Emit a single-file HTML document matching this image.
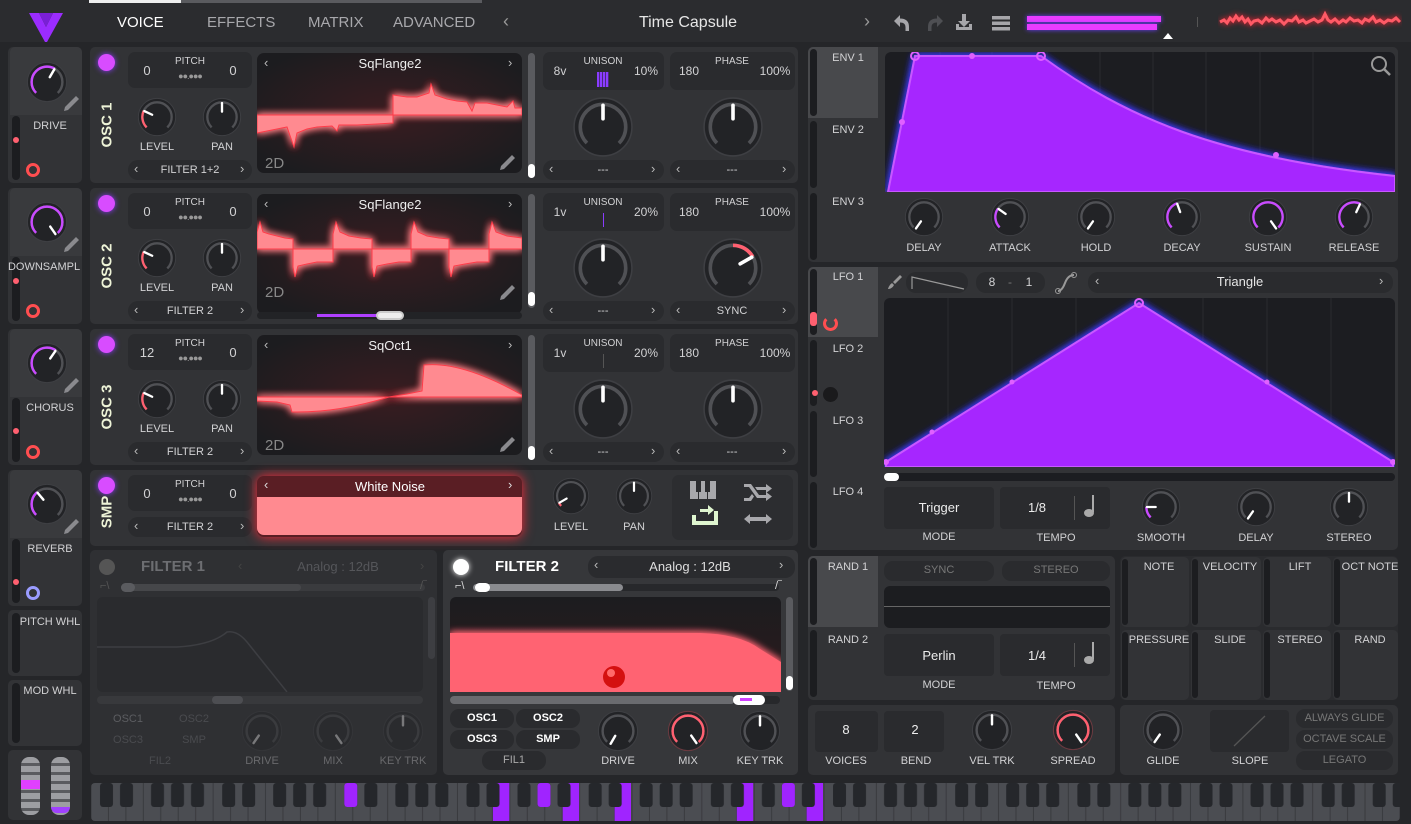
<!DOCTYPE html>
<html><head><meta charset="utf-8">
<style>
*{box-sizing:border-box;margin:0;padding:0}
body{width:1411px;height:824px;background:#252629;font-family:"Liberation Sans",sans-serif;color:#d4d4d6;position:relative;overflow:hidden}
.p{position:absolute}
.c{position:absolute;transform:translateX(-50%);white-space:nowrap;font-size:11px;color:#d2d2d4;line-height:12px}
.pn{position:absolute;background:#323336;border-radius:5px}
.bx{position:absolute;background:#2a2b2e;border-radius:7px}
.dk{position:absolute;background:#1f2023;border-radius:5px}
.sl{position:absolute;background:#1c1d20;border-radius:4px}
.k .o{fill:#222326;stroke:#3e3f43;stroke-width:1.5}
.k .t{fill:none;stroke:#505155;stroke-width:3.5;stroke-dasharray:103.7 100}
.k .v{fill:none;stroke-width:3.5}
.k line{stroke:#fff;stroke-width:3.5;stroke-linecap:round}
.vt{position:absolute;transform:translate(-50%,-50%) rotate(-90deg);font-weight:bold;font-size:15px;color:#eef4d8;white-space:nowrap}
.ar{position:absolute;font-size:13px;color:#bbb}
.dim{opacity:.35}
.tab{position:absolute;font-size:11px;color:#d8d8d8;transform:translateX(-50%)}
.btn{position:absolute;background:#2a2b2e;border-radius:9px;font-size:11px;text-align:center;line-height:19px}
</style></head><body>

<!-- TOP BAR -->
<div class="p" style="left:0;top:0;width:1411px;height:42px;background:#2b2c2f"></div>
<div class="p" style="left:89px;top:0;width:92px;height:3px;background:#eee"></div>
<div class="p" style="left:181px;top:0;width:301px;height:3px;background:#5a5b5f"></div>
<svg class="p" style="left:26px;top:10px" width="40" height="34" viewBox="0 0 40 34"><path d="M3,3 L13,3 L20,17 L27,3 L37,3 L21,32 L19,32 Z" fill="#9b2cff"/><path d="M13,3 L20,17 L27,3" fill="#7a1fd6"/></svg>
<div class="p" style="left:117px;top:14px;font-size:15px;color:#fff">VOICE</div>
<div class="p" style="left:207px;top:14px;font-size:15px;color:#a8a8ac">EFFECTS</div>
<div class="p" style="left:308px;top:14px;font-size:15px;color:#a8a8ac">MATRIX</div>
<div class="p" style="left:393px;top:14px;font-size:15px;color:#a8a8ac">ADVANCED</div>
<div class="p" style="left:503px;top:11px;font-size:18px;color:#999">‹</div>
<div class="c" style="left:688px;top:14px;font-size:16px;line-height:18px;color:#e6e6e6">Time Capsule</div>
<div class="p" style="left:864px;top:11px;font-size:18px;color:#999">›</div>
<svg class="p" style="left:890px;top:12px" width="125" height="22" viewBox="0 0 125 22">
<path d="M4,9 L10,3 L10,6.5 Q19,6.5 19,15 L19,19 L15.5,19 L15.5,15 Q15.5,10.5 10,10.5 L10,15 Z" fill="#a6a6aa"/>
<path d="M53,9 L47,3 L47,6.5 Q38,6.5 38,15 L38,19 L41.5,19 L41.5,15 Q41.5,10.5 47,10.5 L47,15 Z" fill="#4e4f53"/>
<path d="M72,2 L76,2 L76,9 L80,9 L74,15 L68,9 L72,9 Z" fill="#a6a6aa"/><path d="M66,12 L66,18 L82,18 L82,12 L79,12 L79,15 L69,15 L69,12Z" fill="#a6a6aa"/>
<rect x="102" y="4" width="18" height="3.5" fill="#a6a6aa"/><rect x="102" y="9.5" width="18" height="3.5" fill="#a6a6aa"/><rect x="102" y="15" width="18" height="3.5" fill="#a6a6aa"/>
</svg>
<div class="p" style="left:1027px;top:16px;width:134px;height:6px;background:#e83cff;box-shadow:0 0 5px #6a3cff"></div>
<div class="p" style="left:1027px;top:24px;width:130px;height:6px;background:#e83cff;box-shadow:0 0 5px #6a3cff"></div>
<div class="p" style="left:1163px;top:33px;width:0;height:0;border-left:5px solid transparent;border-right:5px solid transparent;border-bottom:6px solid #fff"></div>
<div class="p" style="left:1197px;top:17px;width:1px;height:10px;background:#555"></div>
<svg class="p" style="left:1218px;top:8px" width="184" height="28" viewBox="0 0 184 28"><polyline fill="none" stroke="#ff5a66" stroke-width="3" style="filter:drop-shadow(0 0 3px #ff2030)" points="2,14 6,12 9,15 12,10 15,13 18,8 21,12 24,9 27,14 30,11 33,16 36,13 40,12 44,15 48,10 51,13 54,11 58,14 62,12 66,16 70,12 74,13 78,9 81,14 85,12 88,15 92,13 96,11 100,14 104,12 107,6 110,12 113,14 117,11 121,15 125,12 128,14 132,10 136,13 140,12 144,15 147,11 151,13 155,9 158,14 162,12 166,15 170,12 174,13 178,10 182,14"/></svg>

<!-- LEFT MACROS -->
<div class="pn" style="left:8px;top:47px;width:74px;height:136px"></div>
<div class="p" style="left:10px;top:47px;width:72px;height:68px;background:#393a3d;border-radius:5px 5px 0 0"></div>
<div class="pn" style="left:8px;top:188px;width:74px;height:136px"></div>
<div class="p" style="left:10px;top:188px;width:72px;height:68px;background:#393a3d;border-radius:5px 5px 0 0"></div>
<div class="pn" style="left:8px;top:329px;width:74px;height:136px"></div>
<div class="p" style="left:10px;top:329px;width:72px;height:68px;background:#393a3d;border-radius:5px 5px 0 0"></div>
<div class="pn" style="left:8px;top:470px;width:74px;height:136px"></div>
<div class="p" style="left:10px;top:470px;width:72px;height:68px;background:#393a3d;border-radius:5px 5px 0 0"></div>
<div class="pn" style="left:8px;top:610px;width:74px;height:66px"></div>
<div class="pn" style="left:8px;top:680px;width:74px;height:66px"></div>
<div class="pn" style="left:8px;top:750px;width:74px;height:70px"></div>
<div class="sl" style="left:12px;top:116px;width:8px;height:64px"></div>
<div class="sl" style="left:12px;top:257px;width:8px;height:64px"></div>
<div class="sl" style="left:12px;top:398px;width:8px;height:64px"></div>
<div class="sl" style="left:12px;top:539px;width:8px;height:64px"></div>
<div class="sl" style="left:12px;top:613px;width:8px;height:60px"></div>
<div class="sl" style="left:12px;top:683px;width:8px;height:60px"></div>
<div class="p" style="left:13px;top:137px;width:6px;height:6px;border-radius:3px;background:#ff6070"></div>
<div class="p" style="left:13px;top:278px;width:6px;height:6px;border-radius:3px;background:#ff6070"></div>
<div class="p" style="left:13px;top:428px;width:6px;height:6px;border-radius:3px;background:#ff6070"></div>
<div class="p" style="left:13px;top:579px;width:6px;height:6px;border-radius:3px;background:#ff6070"></div>
<div class="p" style="left:26px;top:163px;width:14px;height:14px;border-radius:7px;border:3px solid #ff4e50"></div>
<div class="p" style="left:26px;top:304px;width:14px;height:14px;border-radius:7px;border:3px solid #ff4e50"></div>
<div class="p" style="left:26px;top:445px;width:14px;height:14px;border-radius:7px;border:3px solid #ff4e50"></div>
<div class="p" style="left:26px;top:586px;width:14px;height:14px;border-radius:7px;border:3px solid #9a9cff"></div>
<div class="c" style="left:50px;top:120px">DRIVE</div>
<div class="c" style="left:44px;top:261px">DOWNSAMPL</div>
<div class="c" style="left:50px;top:402px">CHORUS</div>
<div class="c" style="left:50px;top:543px">REVERB</div>
<div class="c" style="left:50px;top:616px">PITCH WHL</div>
<div class="c" style="left:50px;top:685px">MOD WHL</div>
<svg class="p k" style="left:26px;top:61px" width="42" height="42" viewBox="-30 -30 60 60"><circle class="o" r="28"/><circle class="t" r="22" transform="rotate(135)"/><circle class="v" r="22" stroke="#c94bff" stroke-dasharray="63.4 200" transform="rotate(135)"/><line y1="-8" y2="-21" transform="rotate(30)"/></svg>
<svg class="p k" style="left:26px;top:201px" width="42" height="42" viewBox="-30 -30 60 60"><circle class="o" r="28"/><circle class="t" r="22" transform="rotate(135)"/><circle class="v" r="22" stroke="#c94bff" stroke-dasharray="103.7 200" transform="rotate(135)"/><line y1="-8" y2="-21" transform="rotate(145)"/></svg>
<svg class="p k" style="left:26px;top:342px" width="42" height="42" viewBox="-30 -30 60 60"><circle class="o" r="28"/><circle class="t" r="22" transform="rotate(135)"/><circle class="v" r="22" stroke="#c94bff" stroke-dasharray="65 200" transform="rotate(135)"/><line y1="-8" y2="-21" transform="rotate(35)"/></svg>
<svg class="p k" style="left:26px;top:483px" width="42" height="42" viewBox="-30 -30 60 60"><circle class="o" r="28"/><circle class="t" r="22" transform="rotate(135)"/><circle class="v" r="22" stroke="#c94bff" stroke-dasharray="36.5 200" transform="rotate(135)"/><line y1="-8" y2="-21" transform="rotate(-40)"/></svg>
<svg class="p" style="left:62px;top:94px" width="18" height="18" viewBox="0 0 18 18"><path d="M14,2 L17,5 L6,16 L2,17 L3,13 Z" fill="#8a8a8e"/></svg>
<svg class="p" style="left:62px;top:235px" width="18" height="18" viewBox="0 0 18 18"><path d="M14,2 L17,5 L6,16 L2,17 L3,13 Z" fill="#8a8a8e"/></svg>
<svg class="p" style="left:62px;top:376px" width="18" height="18" viewBox="0 0 18 18"><path d="M14,2 L17,5 L6,16 L2,17 L3,13 Z" fill="#8a8a8e"/></svg>
<svg class="p" style="left:62px;top:517px" width="18" height="18" viewBox="0 0 18 18"><path d="M14,2 L17,5 L6,16 L2,17 L3,13 Z" fill="#8a8a8e"/></svg>
<div class="p" style="left:21px;top:757px;width:19px;height:58px;border-radius:8px;background:repeating-linear-gradient(#9d9ea2 0 6px,#5a5b5f 6px 9px)"></div>
<div class="p" style="left:21px;top:780px;width:19px;height:9px;background:#e040ff"></div>
<div class="p" style="left:51px;top:757px;width:19px;height:58px;border-radius:8px;background:repeating-linear-gradient(#9d9ea2 0 6px,#5a5b5f 6px 9px)"></div>
<div class="p" style="left:51px;top:807px;width:19px;height:6px;background:#a040ff;border-radius:0 0 6px 6px"></div>

<!-- OSC ROWS -->
<div class="pn" style="left:90px;top:47px;width:708px;height:136px"></div>
<div class="pn" style="left:90px;top:188px;width:708px;height:136px"></div>
<div class="pn" style="left:90px;top:329px;width:708px;height:136px"></div>
<div class="pn" style="left:90px;top:470px;width:708px;height:76px"></div>

<!-- generic per-osc -->
<div class="p" style="left:98px;top:54px;width:17px;height:17px;border-radius:9px;background:#d84cff;box-shadow:0 0 6px #8a3cff"></div>
<div class="p" style="left:98px;top:195px;width:17px;height:17px;border-radius:9px;background:#d84cff;box-shadow:0 0 6px #8a3cff"></div>
<div class="p" style="left:98px;top:336px;width:17px;height:17px;border-radius:9px;background:#d84cff;box-shadow:0 0 6px #8a3cff"></div>
<div class="p" style="left:98px;top:477px;width:17px;height:17px;border-radius:9px;background:#d84cff;box-shadow:0 0 6px #8a3cff"></div>
<div class="vt" style="left:107px;top:125px">OSC 1</div>
<div class="vt" style="left:107px;top:266px">OSC 2</div>
<div class="vt" style="left:107px;top:407px">OSC 3</div>
<div class="vt" style="left:107px;top:512px">SMP</div>

<!-- pitch boxes -->
<div class="bx" style="left:128px;top:52px;width:124px;height:36px"></div>
<div class="bx" style="left:128px;top:193px;width:124px;height:36px"></div>
<div class="bx" style="left:128px;top:334px;width:124px;height:36px"></div>
<div class="bx" style="left:128px;top:475px;width:124px;height:36px"></div>
<div class="c" style="left:147px;top:65px;font-size:13px">0</div><div class="c" style="left:190px;top:56px;font-size:10px">PITCH</div><div class="c" style="left:233px;top:65px;font-size:13px">0</div>
<div class="c" style="left:147px;top:206px;font-size:13px">0</div><div class="c" style="left:190px;top:197px;font-size:10px">PITCH</div><div class="c" style="left:233px;top:206px;font-size:13px">0</div>
<div class="c" style="left:147px;top:347px;font-size:13px">12</div><div class="c" style="left:190px;top:338px;font-size:10px">PITCH</div><div class="c" style="left:233px;top:347px;font-size:13px">0</div>
<div class="c" style="left:147px;top:488px;font-size:13px">0</div><div class="c" style="left:190px;top:479px;font-size:10px">PITCH</div><div class="c" style="left:233px;top:488px;font-size:13px">0</div>
<div class="c" style="left:190px;top:70px;font-size:9px;color:#999;letter-spacing:-1px">●●.●●●</div>
<div class="c" style="left:190px;top:211px;font-size:9px;color:#999;letter-spacing:-1px">●●.●●●</div>
<div class="c" style="left:190px;top:352px;font-size:9px;color:#999;letter-spacing:-1px">●●.●●●</div>
<div class="c" style="left:190px;top:493px;font-size:9px;color:#999;letter-spacing:-1px">●●.●●●</div>

<!-- level/pan knobs -->
<svg class="p k" style="left:137px;top:97px" width="40" height="40" viewBox="-30 -30 60 60"><circle class="o" r="28"/><circle class="t" r="22" transform="rotate(135)"/><circle class="v" r="22" stroke="#ff6070" stroke-dasharray="26.9 200" transform="rotate(135)"/><line y1="-8" y2="-21" transform="rotate(-65)"/></svg>
<svg class="p k" style="left:202px;top:97px" width="40" height="40" viewBox="-30 -30 60 60"><circle class="o" r="28"/><circle class="t" r="22" transform="rotate(135)"/><line y1="-8" y2="-21"/></svg>
<svg class="p k" style="left:137px;top:238px" width="40" height="40" viewBox="-30 -30 60 60"><circle class="o" r="28"/><circle class="t" r="22" transform="rotate(135)"/><circle class="v" r="22" stroke="#ff6070" stroke-dasharray="26.9 200" transform="rotate(135)"/><line y1="-8" y2="-21" transform="rotate(-65)"/></svg>
<svg class="p k" style="left:202px;top:238px" width="40" height="40" viewBox="-30 -30 60 60"><circle class="o" r="28"/><circle class="t" r="22" transform="rotate(135)"/><line y1="-8" y2="-21"/></svg>
<svg class="p k" style="left:137px;top:379px" width="40" height="40" viewBox="-30 -30 60 60"><circle class="o" r="28"/><circle class="t" r="22" transform="rotate(135)"/><circle class="v" r="22" stroke="#ff6070" stroke-dasharray="26.9 200" transform="rotate(135)"/><line y1="-8" y2="-21" transform="rotate(-65)"/></svg>
<svg class="p k" style="left:202px;top:379px" width="40" height="40" viewBox="-30 -30 60 60"><circle class="o" r="28"/><circle class="t" r="22" transform="rotate(135)"/><line y1="-8" y2="-21"/></svg>
<div class="c" style="left:157px;top:141px">LEVEL</div><div class="c" style="left:222px;top:141px">PAN</div>
<div class="c" style="left:157px;top:282px">LEVEL</div><div class="c" style="left:222px;top:282px">PAN</div>
<div class="c" style="left:157px;top:423px">LEVEL</div><div class="c" style="left:222px;top:423px">PAN</div>

<!-- filter selectors -->
<div class="bx" style="left:128px;top:160px;width:124px;height:20px;border-radius:10px"></div>
<div class="bx" style="left:128px;top:301px;width:124px;height:20px;border-radius:10px"></div>
<div class="bx" style="left:128px;top:442px;width:124px;height:20px;border-radius:10px"></div>
<div class="bx" style="left:128px;top:517px;width:124px;height:20px;border-radius:10px"></div>
<div class="c" style="left:190px;top:164px">FILTER 1+2</div><div class="ar" style="left:134px;top:161px">‹</div><div class="ar" style="left:240px;top:161px">›</div>
<div class="c" style="left:190px;top:305px">FILTER 2</div><div class="ar" style="left:134px;top:302px">‹</div><div class="ar" style="left:240px;top:302px">›</div>
<div class="c" style="left:190px;top:446px">FILTER 2</div><div class="ar" style="left:134px;top:443px">‹</div><div class="ar" style="left:240px;top:443px">›</div>
<div class="c" style="left:190px;top:521px">FILTER 2</div><div class="ar" style="left:134px;top:518px">‹</div><div class="ar" style="left:240px;top:518px">›</div>

<!-- wave displays -->
<svg class="p" style="left:257px;top:53px" width="265" height="120" viewBox="0 0 265 120">
<defs><filter id="gl" x="-20%" y="-40%" width="140%" height="180%"><feGaussianBlur stdDeviation="4" result="b"/><feMerge><feMergeNode in="b"/><feMergeNode in="b"/><feMergeNode in="SourceGraphic"/></feMerge></filter>
<radialGradient id="rg" cx="50%" cy="50%" r="60%"><stop offset="0" stop-color="#3a1c20"/><stop offset="1" stop-color="#1c1c1f"/></radialGradient></defs>
<rect width="265" height="120" rx="7" fill="url(#rg)"/>
<path filter="url(#gl)" fill="#ff8a90" stroke="#ff3a48" stroke-width="1" d="M0,62 L0,80 L10,78 L20,76 L30,74 L37,94 L40,80 L50,76 L60,74 L75,73 L80,78 L82,72 L100,72 L120,71 L136,70 L136,42 L150,44 L160,44 L172,40 L174,31 L178,42 L190,46 L200,48 L210,49 L215,58 L218,50 L230,50 L240,52 L250,54 L256,48 L258,55 L265,55 L265,62 Z"/>
</svg>
<svg class="p" style="left:257px;top:194px" width="265" height="120" viewBox="0 0 265 120">
<rect width="265" height="120" rx="7" fill="url(#rg)"/>
<path filter="url(#gl)" fill="#ff8a90" stroke="#ff3a48" stroke-width="1" d="M0,55 L0,38 L3,28 L6,38 L12,40 L20,42 L28,44 L36,45 L36,73 L38,83 L41,72 L50,70 L60,68 L76,68 L76,40 L79,28 L83,38 L92,42 L104,44 L115,45 L115,73 L117,83 L120,72 L130,70 L142,68 L154,68 L154,40 L157,28 L161,38 L170,42 L182,44 L192,45 L192,73 L194,83 L197,72 L208,70 L220,68 L232,68 L232,40 L235,28 L239,38 L250,42 L265,44 L265,55 Z"/>
</svg>
<svg class="p" style="left:257px;top:335px" width="265" height="120" viewBox="0 0 265 120">
<rect width="265" height="120" rx="7" fill="url(#rg)"/>
<path filter="url(#gl)" fill="#ff8a90" stroke="#ff3a48" stroke-width="1" d="M0,62 L0,66 L20,67 L33,70 L35,77 Q80,78 132,62 L150,59 L165,56 L167,30 Q205,26 265,60 L265,62 Z"/>
</svg>
<div class="c" style="left:390px;top:57px;font-size:13px;line-height:14px;color:#eee">SqFlange2</div>
<div class="c" style="left:390px;top:198px;font-size:13px;line-height:14px;color:#eee">SqFlange2</div>
<div class="c" style="left:390px;top:339px;font-size:13px;line-height:14px;color:#eee">SqOct1</div>
<div class="ar" style="left:264px;top:55px">‹</div><div class="ar" style="left:508px;top:55px">›</div>
<div class="ar" style="left:264px;top:196px">‹</div><div class="ar" style="left:508px;top:196px">›</div>
<div class="ar" style="left:264px;top:337px">‹</div><div class="ar" style="left:508px;top:337px">›</div>
<div class="p" style="left:265px;top:155px;font-size:15px;color:#888">2D</div>
<div class="p" style="left:265px;top:284px;font-size:15px;color:#888">2D</div>
<div class="p" style="left:265px;top:437px;font-size:15px;color:#888">2D</div>
<svg class="p" style="left:498px;top:153px" width="18" height="18" viewBox="0 0 18 18"><path d="M14,2 L17,5 L6,16 L2,17 L3,13 Z" fill="#8a8a8e"/></svg>
<svg class="p" style="left:498px;top:283px" width="18" height="18" viewBox="0 0 18 18"><path d="M14,2 L17,5 L6,16 L2,17 L3,13 Z" fill="#8a8a8e"/></svg>
<svg class="p" style="left:498px;top:435px" width="18" height="18" viewBox="0 0 18 18"><path d="M14,2 L17,5 L6,16 L2,17 L3,13 Z" fill="#8a8a8e"/></svg>
<!-- osc2 spectral slider -->
<div class="p" style="left:257px;top:312px;width:265px;height:7px;background:#222326;border-radius:4px"></div>
<div class="p" style="left:317px;top:314px;width:62px;height:3px;background:#b040ff"></div>
<div class="p" style="left:376px;top:311px;width:28px;height:9px;background:#eee;border-radius:5px;border:2px solid #ccc"></div>
<!-- vertical sliders -->
<div class="p" style="left:528px;top:53px;width:7px;height:125px;background:#5a5b5f;border-radius:4px"></div>
<div class="p" style="left:528px;top:164px;width:7px;height:14px;background:#fff;border-radius:4px"></div>
<div class="p" style="left:528px;top:194px;width:7px;height:114px;background:#5a5b5f;border-radius:4px"></div>
<div class="p" style="left:528px;top:292px;width:7px;height:14px;background:#fff;border-radius:4px"></div>
<div class="p" style="left:528px;top:335px;width:7px;height:125px;background:#5a5b5f;border-radius:4px"></div>
<div class="p" style="left:528px;top:446px;width:7px;height:14px;background:#fff;border-radius:4px"></div>

<!-- unison/phase -->
<div class="bx" style="left:543px;top:52px;width:121px;height:38px"></div><div class="bx" style="left:670px;top:52px;width:125px;height:38px"></div>
<div class="bx" style="left:543px;top:193px;width:121px;height:38px"></div><div class="bx" style="left:670px;top:193px;width:125px;height:38px"></div>
<div class="bx" style="left:543px;top:334px;width:121px;height:38px"></div><div class="bx" style="left:670px;top:334px;width:125px;height:38px"></div>
<div class="c" style="left:560px;top:65px;font-size:12px">8v</div><div class="c" style="left:603px;top:56px;font-size:10px">UNISON</div><div class="c" style="left:646px;top:65px;font-size:12px">10%</div>
<div class="c" style="left:689px;top:65px;font-size:12px">180</div><div class="c" style="left:732px;top:56px;font-size:10px">PHASE</div><div class="c" style="left:775px;top:65px;font-size:12px">100%</div>
<div class="c" style="left:560px;top:206px;font-size:12px">1v</div><div class="c" style="left:603px;top:197px;font-size:10px">UNISON</div><div class="c" style="left:646px;top:206px;font-size:12px">20%</div>
<div class="c" style="left:689px;top:206px;font-size:12px">180</div><div class="c" style="left:732px;top:197px;font-size:10px">PHASE</div><div class="c" style="left:775px;top:206px;font-size:12px">100%</div>
<div class="c" style="left:560px;top:347px;font-size:12px">1v</div><div class="c" style="left:603px;top:338px;font-size:10px">UNISON</div><div class="c" style="left:646px;top:347px;font-size:12px">20%</div>
<div class="c" style="left:689px;top:347px;font-size:12px">180</div><div class="c" style="left:732px;top:338px;font-size:10px">PHASE</div><div class="c" style="left:775px;top:347px;font-size:12px">100%</div>
<div class="p" style="left:597px;top:72px;width:12px;height:15px;background:repeating-linear-gradient(90deg,#8a3cff 0 2px,#4a2a7a 2px 3px)"></div>
<div class="p" style="left:603px;top:213px;width:1px;height:14px;background:#8a3cff"></div>
<div class="p" style="left:603px;top:354px;width:1px;height:14px;background:#555"></div>
<svg class="p k" style="left:572px;top:96px" width="62" height="62" viewBox="-30 -30 60 60"><circle class="o" r="28"/><circle class="t" r="22" transform="rotate(135)"/><line y1="-8" y2="-21"/></svg>
<svg class="p k" style="left:702px;top:96px" width="62" height="62" viewBox="-30 -30 60 60"><circle class="o" r="28"/><circle class="t" r="22" transform="rotate(135)"/><line y1="-8" y2="-21"/></svg>
<svg class="p k" style="left:572px;top:237px" width="62" height="62" viewBox="-30 -30 60 60"><circle class="o" r="28"/><circle class="t" r="22" transform="rotate(135)"/><line y1="-8" y2="-21"/></svg>
<svg class="p k" style="left:702px;top:237px" width="62" height="62" viewBox="-30 -30 60 60"><circle class="o" r="28"/><circle class="t" r="22" transform="rotate(135)"/><circle class="v" r="22" stroke="#ff6070" stroke-dasharray="23 200" transform="rotate(-90)"/><line y1="-8" y2="-21" transform="rotate(60)"/></svg>
<svg class="p k" style="left:572px;top:378px" width="62" height="62" viewBox="-30 -30 60 60"><circle class="o" r="28"/><circle class="t" r="22" transform="rotate(135)"/><line y1="-8" y2="-21"/></svg>
<svg class="p k" style="left:702px;top:378px" width="62" height="62" viewBox="-30 -30 60 60"><circle class="o" r="28"/><circle class="t" r="22" transform="rotate(135)"/><line y1="-8" y2="-21"/></svg>
<div class="bx" style="left:543px;top:160px;width:121px;height:20px;border-radius:10px"></div><div class="bx" style="left:670px;top:160px;width:125px;height:20px;border-radius:10px"></div>
<div class="bx" style="left:543px;top:301px;width:121px;height:20px;border-radius:10px"></div><div class="bx" style="left:670px;top:301px;width:125px;height:20px;border-radius:10px"></div>
<div class="bx" style="left:543px;top:442px;width:121px;height:20px;border-radius:10px"></div><div class="bx" style="left:670px;top:442px;width:125px;height:20px;border-radius:10px"></div>
<div class="c" style="left:603px;top:164px">---</div><div class="ar" style="left:549px;top:161px">‹</div><div class="ar" style="left:651px;top:161px">›</div>
<div class="c" style="left:732px;top:164px">---</div><div class="ar" style="left:676px;top:161px">‹</div><div class="ar" style="left:782px;top:161px">›</div>
<div class="c" style="left:603px;top:305px">---</div><div class="ar" style="left:549px;top:302px">‹</div><div class="ar" style="left:651px;top:302px">›</div>
<div class="c" style="left:732px;top:305px">SYNC</div><div class="ar" style="left:676px;top:302px">‹</div><div class="ar" style="left:782px;top:302px">›</div>
<div class="c" style="left:603px;top:446px">---</div><div class="ar" style="left:549px;top:443px">‹</div><div class="ar" style="left:651px;top:443px">›</div>
<div class="c" style="left:732px;top:446px">---</div><div class="ar" style="left:676px;top:443px">‹</div><div class="ar" style="left:782px;top:443px">›</div>

<!-- SMP row -->
<div class="p" style="left:257px;top:476px;width:265px;height:61px;border-radius:7px;background:#5a1e24;box-shadow:0 0 12px #ff2a3a"></div>
<div class="p" style="left:257px;top:497px;width:265px;height:38px;border-radius:0 0 7px 7px;background:#ff8a90"></div>
<div class="c" style="left:390px;top:480px;font-size:13px;line-height:14px;color:#fff">White Noise</div>
<div class="ar" style="left:264px;top:477px;color:#ddd">‹</div><div class="ar" style="left:508px;top:477px;color:#ddd">›</div>
<svg class="p k" style="left:552px;top:477px" width="38" height="38" viewBox="-30 -30 60 60"><circle class="o" r="28"/><circle class="t" r="22" transform="rotate(135)"/><circle class="v" r="22" stroke="#ff6070" stroke-dasharray="6 200" transform="rotate(135)"/><line y1="-8" y2="-21" transform="rotate(-120)"/></svg>
<svg class="p k" style="left:615px;top:477px" width="38" height="38" viewBox="-30 -30 60 60"><circle class="o" r="28"/><circle class="t" r="22" transform="rotate(135)"/><line y1="-8" y2="-21"/></svg>
<div class="c" style="left:571px;top:521px">LEVEL</div><div class="c" style="left:634px;top:521px">PAN</div>
<div class="bx" style="left:672px;top:475px;width:121px;height:65px;background:#2c2d30"></div>
<svg class="p" style="left:688px;top:479px" width="90" height="54" viewBox="0 0 90 54">
<rect x="2" y="2" width="8" height="18" fill="#a8a8ac"/><rect x="11" y="2" width="8" height="18" fill="#a8a8ac"/><rect x="20" y="2" width="8" height="18" fill="#a8a8ac"/><rect x="8" y="2" width="5" height="11" fill="#2c2d30"/><rect x="17" y="2" width="5" height="11" fill="#2c2d30"/>
<path d="M56,5 L63,5 L71,16 L78,16 L78,13 L84,17.5 L78,22 L78,19 L69,19 L61,8 L56,8 Z M56,19 L61,19 L64,15 L66,17.5 L63,22 L56,22Z M67,8 L78,8 L78,5 L84,9.5 L78,14 L78,11 L69,11Z" fill="#a8a8ac"/>
<path d="M4,36 L4,46 L30,46 L30,32 L26,32 L26,42 L8,42 L8,36 Z M12,30 L20,30 L20,26 L26,31 L20,36 L20,33 L12,33 Z" fill="#dff5cf"/>
<path d="M56,40 L62,35 L62,38 L78,38 L78,35 L84,40 L78,45 L78,42 L62,42 L62,45 Z" fill="#a8a8ac"/>
</svg>

<!-- FILTER 1 -->
<div class="pn" style="left:90px;top:550px;width:347px;height:225px;background:#2f3033"></div>
<div class="p" style="left:99px;top:559px;width:16px;height:16px;border-radius:8px;background:#555"></div>
<div class="c" style="left:173px;top:559px;font-size:15px;line-height:16px;font-weight:bold;color:#6d6e72">FILTER 1</div>
<div class="c" style="left:338px;top:560px;font-size:13px;line-height:14px;color:#55565a">Analog : 12dB</div>
<div class="ar" style="left:238px;top:558px;color:#444">‹</div><div class="ar" style="left:420px;top:558px;color:#444">›</div>
<div class="p" style="left:121px;top:584px;width:304px;height:7px;background:#3a3b3e;border-radius:4px"></div>
<div class="p" style="left:121px;top:584px;width:180px;height:7px;background:#46474a;border-radius:4px"></div>
<div class="p" style="left:121px;top:583px;width:14px;height:9px;background:#5a5b5f;border-radius:5px"></div>
<div class="p" style="left:97px;top:597px;width:326px;height:95px;background:#2a2b2e;border-radius:6px"></div>
<svg class="p" style="left:97px;top:597px" width="326" height="95"><path d="M0,50 L80,50 Q115,48 130,35 Q140,33 150,45 L190,95" fill="none" stroke="#3d3e42" stroke-width="1.5"/></svg>
<div class="p" style="left:428px;top:597px;width:7px;height:62px;background:#3d3e42;border-radius:4px"></div>
<div class="p" style="left:97px;top:696px;width:326px;height:8px;background:#38393c;border-radius:4px"></div>
<div class="p" style="left:212px;top:696px;width:31px;height:8px;background:#4d4e52;border-radius:4px"></div>
<div class="c" style="left:128px;top:713px;color:#5c5d61">OSC1</div><div class="c" style="left:194px;top:713px;color:#4a4b4f">OSC2</div>
<div class="c" style="left:128px;top:734px;color:#4a4b4f">OSC3</div><div class="c" style="left:194px;top:734px;color:#4a4b4f">SMP</div>
<div class="c" style="left:160px;top:755px;color:#4a4b4f">FIL2</div>
<div class="dim">
<svg class="p k" style="left:241px;top:710px" width="42" height="42" viewBox="-30 -30 60 60"><circle class="o" r="28"/><circle class="t" r="22" transform="rotate(135)"/><line y1="-8" y2="-21" transform="rotate(-145)"/></svg>
<svg class="p k" style="left:312px;top:710px" width="42" height="42" viewBox="-30 -30 60 60"><circle class="o" r="28"/><circle class="t" r="22" transform="rotate(135)"/><line y1="-8" y2="-21" transform="rotate(145)"/></svg>
<svg class="p k" style="left:382px;top:710px" width="42" height="42" viewBox="-30 -30 60 60"><circle class="o" r="28"/><circle class="t" r="22" transform="rotate(135)"/><line y1="-8" y2="-21"/></svg>
<div class="c" style="left:262px;top:755px">DRIVE</div><div class="c" style="left:333px;top:755px">MIX</div><div class="c" style="left:403px;top:755px">KEY TRK</div>
</div>

<!-- FILTER 2 -->
<div class="pn" style="left:443px;top:550px;width:355px;height:225px;background:#36373a"></div>
<div class="p" style="left:453px;top:559px;width:16px;height:16px;border-radius:8px;background:#fff;box-shadow:0 0 6px #fff"></div>
<div class="c" style="left:527px;top:559px;font-size:15px;line-height:16px;font-weight:bold;color:#fff">FILTER 2</div>
<div class="bx" style="left:588px;top:556px;width:207px;height:22px;border-radius:10px"></div>
<div class="c" style="left:690px;top:560px;font-size:13px;line-height:14px;color:#ddd">Analog : 12dB</div>
<div class="ar" style="left:594px;top:557px">‹</div><div class="ar" style="left:779px;top:557px">›</div>
<div class="p" style="left:473px;top:584px;width:306px;height:7px;background:#27282b;border-radius:4px"></div>
<div class="p" style="left:473px;top:584px;width:150px;height:7px;background:#8a8b8f;border-radius:4px"></div>
<div class="p" style="left:475px;top:583px;width:15px;height:9px;background:#fff;border-radius:5px"></div>
<div class="p" style="left:455px;top:580px;font-size:11px;color:#ddd">⌐\</div><div class="p" style="left:775px;top:580px;font-size:11px;color:#ddd">/‾</div>
<div class="p" style="left:100px;top:580px;font-size:11px;color:#555">⌐\</div><div class="p" style="left:420px;top:580px;font-size:11px;color:#555">/‾</div>
<svg class="p" style="left:450px;top:597px" width="331" height="95" viewBox="0 0 331 95">
<defs><linearGradient id="fg" x1="0" y1="0" x2="0" y2="1"><stop offset="0" stop-color="#1c1c1f"/><stop offset="1" stop-color="#2c1a1d"/></linearGradient></defs>
<rect width="331" height="95" rx="6" fill="url(#fg)"/>
<path filter="url(#gl)" d="M0,95 L0,36 L250,36 Q290,37 310,52 L331,65 L331,95 Z" fill="#ff6472"/>
<circle cx="164" cy="80" r="11" fill="#d41010"/><circle cx="161" cy="76" r="4" fill="#ff6a6a"/>
</svg>
<div class="p" style="left:786px;top:597px;width:7px;height:94px;background:#5a5b5f;border-radius:4px"></div>
<div class="p" style="left:786px;top:676px;width:7px;height:14px;background:#fff;border-radius:4px"></div>
<div class="p" style="left:450px;top:696px;width:330px;height:8px;background:#27282b;border-radius:4px"></div>
<div class="p" style="left:450px;top:696px;width:285px;height:8px;background:#6a6b6f;border-radius:4px"></div>
<div class="p" style="left:733px;top:695px;width:32px;height:10px;background:#fff;border-radius:5px"></div>
<div class="p" style="left:740px;top:698px;width:12px;height:3px;background:#d040ff"></div>
<div class="btn" style="left:450px;top:709px;width:64px;height:19px;font-weight:bold;color:#fff">OSC1</div>
<div class="btn" style="left:516px;top:709px;width:64px;height:19px;font-weight:bold;color:#fff">OSC2</div>
<div class="btn" style="left:450px;top:730px;width:64px;height:19px;font-weight:bold;color:#fff">OSC3</div>
<div class="btn" style="left:516px;top:730px;width:64px;height:19px;font-weight:bold;color:#fff">SMP</div>
<div class="btn" style="left:482px;top:751px;width:64px;height:19px;color:#aaa">FIL1</div>
<svg class="p k" style="left:597px;top:710px" width="42" height="42" viewBox="-30 -30 60 60"><circle class="o" r="28"/><circle class="t" r="22" transform="rotate(135)"/><line y1="-8" y2="-21" transform="rotate(-150)"/></svg>
<svg class="p k" style="left:667px;top:710px" width="42" height="42" viewBox="-30 -30 60 60"><circle class="o" r="28" style="stroke:#6a3a40"/><circle class="t" r="22" transform="rotate(135)"/><circle class="v" r="22" stroke="#ff6070" stroke-dasharray="103.7 200" transform="rotate(135)"/><line y1="-8" y2="-21" transform="rotate(145)"/></svg>
<svg class="p k" style="left:739px;top:710px" width="42" height="42" viewBox="-30 -30 60 60"><circle class="o" r="28"/><circle class="t" r="22" transform="rotate(135)"/><line y1="-8" y2="-21"/></svg>
<div class="c" style="left:618px;top:755px">DRIVE</div><div class="c" style="left:688px;top:755px">MIX</div><div class="c" style="left:760px;top:755px">KEY TRK</div>

<!-- KEYBOARD -->
<svg class="p" style="left:91px;top:783px" width="1309" height="38" viewBox="0 0 1309 38">
<defs>
<pattern id="wk" width="17.453" height="38" patternUnits="userSpaceOnUse"><rect width="17.453" height="38" fill="#3a3b3f"/><rect x="0.5" width="16.4" height="38" fill="#4b4d52"/></pattern>
<pattern id="bk" width="122.17" height="38" patternUnits="userSpaceOnUse"><g fill="#25272b"><rect x="9" y="0" width="13" height="24" rx="3"/><rect x="29" y="0" width="13" height="24" rx="3"/><rect x="60" y="0" width="13" height="24" rx="3"/><rect x="80" y="0" width="13" height="24" rx="3"/><rect x="100" y="0" width="13" height="24" rx="3"/></g></pattern>
</defs>
<rect width="1309" height="38" rx="4" fill="url(#wk)"/>
<g fill="#a024ff"><rect x="401.9" width="16.4" height="38"/><rect x="471.7" width="16.4" height="38"/><rect x="523.6" width="16.4" height="38"/><rect x="645.8" width="16.4" height="38"/><rect x="715.6" width="16.4" height="38"/></g>
<rect width="1309" height="38" fill="url(#bk)"/>
<g fill="#a024ff"><rect x="253.3" width="13" height="24" rx="3"/><rect x="446.5" width="13" height="24" rx="3"/><rect x="690.9" width="13" height="24" rx="3"/></g>
</svg>

<!-- RIGHT: ENV -->
<div class="pn" style="left:808px;top:47px;width:590px;height:215px"></div>
<div class="p" style="left:808px;top:47px;width:70px;height:71px;background:#48494c;border-radius:5px 0 0 0"></div>
<div class="sl" style="left:810px;top:49px;width:7px;height:67px"></div>
<div class="sl" style="left:810px;top:121px;width:7px;height:67px"></div>
<div class="sl" style="left:810px;top:193px;width:7px;height:67px"></div>
<div class="c" style="left:848px;top:52px">ENV 1</div><div class="c" style="left:848px;top:124px">ENV 2</div><div class="c" style="left:848px;top:196px">ENV 3</div>
<svg class="p" style="left:885px;top:52px" width="510" height="140" viewBox="0 0 510 140">
<defs><filter id="bg2" x="-10%" y="-20%" width="120%" height="140%"><feGaussianBlur stdDeviation="4" result="b"/><feFlood flood-color="#3a3aff"/><feComposite in2="b" operator="in" result="g"/><feMerge><feMergeNode in="g"/><feMergeNode in="g"/><feMergeNode in="SourceGraphic"/></feMerge></filter></defs>
<rect width="510" height="140" rx="6" fill="#1c1d21"/>
<g stroke="#2a2b30"><line x1="107" y1="0" x2="107" y2="140"/><line x1="162" y1="0" x2="162" y2="140"/><line x1="215" y1="0" x2="215" y2="140"/><line x1="268" y1="0" x2="268" y2="140"/><line x1="321" y1="0" x2="321" y2="140"/><line x1="375" y1="0" x2="375" y2="140"/><line x1="428" y1="0" x2="428" y2="140"/><line x1="55" y1="0" x2="55" y2="140"/></g>
<path filter="url(#bg2)" d="M3,140 L30,4 L156,4 C240,65 330,105 510,124 L510,140 Z" fill="#a626ff" stroke="#c858ff" stroke-width="2"/>
<g fill="#e060ff"><circle cx="87" cy="4" r="3"/><circle cx="17" cy="70" r="3"/><circle cx="391" cy="103" r="3"/></g>
<g fill="none" stroke="#e060ff" stroke-width="2"><circle cx="30" cy="4" r="4"/><circle cx="156" cy="4" r="4"/></g>
<circle cx="494" cy="12" r="7" fill="none" stroke="#999" stroke-width="2"/><line x1="499" y1="17" x2="505" y2="23" stroke="#999" stroke-width="2.5"/>
</svg>
<svg class="p k" style="left:904px;top:197px" width="40" height="40" viewBox="-30 -30 60 60"><circle class="o" r="28"/><circle class="t" r="22" transform="rotate(135)"/><line y1="-8" y2="-21" transform="rotate(-145)"/></svg>
<svg class="p k" style="left:990px;top:197px" width="40" height="40" viewBox="-30 -30 60 60"><circle class="o" r="28"/><circle class="t" r="22" transform="rotate(135)"/><circle class="v" r="22" stroke="#c94bff" stroke-dasharray="30.7 200" transform="rotate(135)"/><line y1="-8" y2="-21" transform="rotate(-55)"/></svg>
<svg class="p k" style="left:1076px;top:197px" width="40" height="40" viewBox="-30 -30 60 60"><circle class="o" r="28"/><circle class="t" r="22" transform="rotate(135)"/><line y1="-8" y2="-21" transform="rotate(-145)"/></svg>
<svg class="p k" style="left:1162px;top:197px" width="40" height="40" viewBox="-30 -30 60 60"><circle class="o" r="28"/><circle class="t" r="22" transform="rotate(135)"/><circle class="v" r="22" stroke="#c94bff" stroke-dasharray="44.2 200" transform="rotate(135)"/><line y1="-8" y2="-21" transform="rotate(-20)"/></svg>
<svg class="p k" style="left:1248px;top:197px" width="40" height="40" viewBox="-30 -30 60 60"><circle class="o" r="28"/><circle class="t" r="22" transform="rotate(135)"/><circle class="v" r="22" stroke="#c94bff" stroke-dasharray="103.7 200" transform="rotate(135)"/><line y1="-8" y2="-21" transform="rotate(145)"/></svg>
<svg class="p k" style="left:1334px;top:197px" width="40" height="40" viewBox="-30 -30 60 60"><circle class="o" r="28"/><circle class="t" r="22" transform="rotate(135)"/><circle class="v" r="22" stroke="#c94bff" stroke-dasharray="61.4 200" transform="rotate(135)"/><line y1="-8" y2="-21" transform="rotate(25)"/></svg>
<div class="c" style="left:924px;top:242px">DELAY</div><div class="c" style="left:1010px;top:242px">ATTACK</div><div class="c" style="left:1096px;top:242px">HOLD</div><div class="c" style="left:1182px;top:242px">DECAY</div><div class="c" style="left:1268px;top:242px">SUSTAIN</div><div class="c" style="left:1354px;top:242px">RELEASE</div>

<!-- LFO -->
<div class="pn" style="left:808px;top:267px;width:590px;height:283px"></div>
<div class="p" style="left:808px;top:267px;width:70px;height:70px;background:#48494c;border-radius:5px 0 0 0"></div>
<div class="sl" style="left:810px;top:269px;width:7px;height:66px"></div>
<div class="sl" style="left:810px;top:340px;width:7px;height:66px"></div>
<div class="sl" style="left:810px;top:411px;width:7px;height:66px"></div>
<div class="sl" style="left:810px;top:482px;width:7px;height:66px"></div>
<div class="p" style="left:810px;top:312px;width:7px;height:14px;background:#ff6070;border-radius:3px"></div>
<div class="p" style="left:823px;top:316px;width:15px;height:15px;border-radius:8px;border:3px solid #ff4e50;border-top-color:transparent"></div>
<div class="p" style="left:812px;top:390px;width:6px;height:6px;background:#ff6070;border-radius:3px"></div>
<div class="p" style="left:823px;top:387px;width:15px;height:15px;border-radius:8px;background:#1a1a1c"></div>
<div class="c" style="left:848px;top:271px">LFO 1</div><div class="c" style="left:848px;top:343px">LFO 2</div><div class="c" style="left:848px;top:415px">LFO 3</div><div class="c" style="left:848px;top:486px">LFO 4</div>
<svg class="p" style="left:887px;top:274px" width="16" height="16" viewBox="0 0 16 16"><path d="M13,1 L15,3 L8,10 L6,8 Z M5,9 L7,11 Q5,15 1,15 Q2,11 5,9Z" fill="#999"/></svg>
<div class="bx" style="left:906px;top:272px;width:62px;height:21px;border-radius:10px"></div>
<svg class="p" style="left:906px;top:272px" width="62" height="21"><path d="M6,17 L6,5 L58,17" fill="none" stroke="#999" stroke-width="1.2"/></svg>
<div class="bx" style="left:976px;top:272px;width:69px;height:21px;border-radius:10px"></div>
<div class="c" style="left:992px;top:276px;font-size:12px">8</div><div class="c" style="left:1010px;top:276px;font-size:12px;color:#777">-</div><div class="c" style="left:1029px;top:276px;font-size:12px">1</div>
<svg class="p" style="left:1055px;top:272px" width="22" height="22" viewBox="0 0 22 22"><path d="M3,19 Q7,19 10,11 Q13,3 19,3" fill="none" stroke="#999" stroke-width="2"/><circle cx="3" cy="19" r="2.5" fill="none" stroke="#999"/><circle cx="19" cy="3" r="2.5" fill="none" stroke="#999"/></svg>
<div class="bx" style="left:1088px;top:272px;width:305px;height:21px;border-radius:10px"></div>
<div class="c" style="left:1240px;top:275px;font-size:13px;line-height:14px;color:#e6e6e6">Triangle</div>
<div class="ar" style="left:1095px;top:273px">‹</div><div class="ar" style="left:1379px;top:273px">›</div>
<svg class="p" style="left:884px;top:298px" width="511" height="169" viewBox="0 0 511 169">
<rect width="511" height="169" rx="6" fill="#1c1d21"/>
<g stroke="#2a2b30"><line x1="64" y1="0" x2="64" y2="169"/><line x1="128" y1="0" x2="128" y2="169"/><line x1="192" y1="0" x2="192" y2="169"/><line x1="319" y1="0" x2="319" y2="169"/><line x1="383" y1="0" x2="383" y2="169"/><line x1="447" y1="0" x2="447" y2="169"/></g>
<path filter="url(#bg2)" d="M2,164 L255,5 L509,164 L509,169 L2,169 Z" fill="#a626ff" stroke="#c858ff" stroke-width="2"/>
<g fill="#e060ff"><circle cx="48" cy="134" r="2.5"/><circle cx="128" cy="84" r="2.5"/><circle cx="383" cy="84" r="2.5"/><circle cx="2" cy="164" r="3"/><circle cx="509" cy="164" r="3"/></g>
<circle cx="255" cy="5" r="4" fill="none" stroke="#e060ff" stroke-width="2"/>
</svg>
<div class="p" style="left:884px;top:473px;width:511px;height:8px;background:#1c1d21;border-radius:4px"></div>
<div class="p" style="left:884px;top:473px;width:15px;height:8px;background:#fff;border-radius:4px"></div>
<div class="bx" style="left:884px;top:487px;width:110px;height:42px;border-radius:4px"></div>
<div class="c" style="left:939px;top:501px;font-size:13px;line-height:14px;color:#ececec">Trigger</div>
<div class="bx" style="left:1000px;top:487px;width:110px;height:42px;border-radius:4px"></div>
<div class="c" style="left:1037px;top:501px;font-size:13px;line-height:14px;color:#ececec">1/8</div>
<div class="p" style="left:1074px;top:496px;width:1px;height:24px;background:#555"></div>
<svg class="p" style="left:1083px;top:494px" width="14" height="24" viewBox="0 0 14 24"><rect x="9" y="1" width="2" height="17" fill="#aaa"/><ellipse cx="6" cy="19" rx="5" ry="4" fill="#aaa"/></svg>
<div class="c" style="left:939px;top:531px">MODE</div><div class="c" style="left:1056px;top:532px">TEMPO</div>
<svg class="p k" style="left:1141px;top:487px" width="40" height="40" viewBox="-30 -30 60 60"><circle class="o" r="28"/><circle class="t" r="22" transform="rotate(135)"/><circle class="v" r="22" stroke="#c94bff" stroke-dasharray="17.3 200" transform="rotate(135)"/><line y1="-8" y2="-21" transform="rotate(-90)"/></svg>
<svg class="p k" style="left:1236px;top:487px" width="40" height="40" viewBox="-30 -30 60 60"><circle class="o" r="28"/><circle class="t" r="22" transform="rotate(135)"/><line y1="-8" y2="-21" transform="rotate(-145)"/></svg>
<svg class="p k" style="left:1329px;top:487px" width="40" height="40" viewBox="-30 -30 60 60"><circle class="o" r="28"/><circle class="t" r="22" transform="rotate(135)"/><line y1="-8" y2="-21"/></svg>
<div class="c" style="left:1161px;top:532px">SMOOTH</div><div class="c" style="left:1256px;top:532px">DELAY</div><div class="c" style="left:1349px;top:532px">STEREO</div>

<!-- RAND -->
<div class="pn" style="left:808px;top:556px;width:307px;height:144px"></div>
<div class="p" style="left:808px;top:556px;width:70px;height:71px;background:#48494c;border-radius:5px 0 0 0"></div>
<div class="sl" style="left:810px;top:558px;width:7px;height:67px"></div>
<div class="sl" style="left:810px;top:630px;width:7px;height:67px"></div>
<div class="c" style="left:848px;top:561px">RAND 1</div><div class="c" style="left:848px;top:634px">RAND 2</div>
<div class="btn" style="left:884px;top:561px;width:110px;height:20px;color:#777">SYNC</div>
<div class="btn" style="left:1002px;top:561px;width:108px;height:20px;color:#777">STEREO</div>
<div class="p" style="left:884px;top:586px;width:226px;height:42px;background:#1c1d20;border-radius:6px"></div>
<div class="p" style="left:884px;top:606px;width:226px;height:1px;background:#666"></div>
<div class="bx" style="left:884px;top:634px;width:110px;height:42px;border-radius:4px"></div>
<div class="c" style="left:939px;top:649px;font-size:13px;line-height:14px;color:#ececec">Perlin</div>
<div class="bx" style="left:1000px;top:634px;width:110px;height:42px;border-radius:4px"></div>
<div class="c" style="left:1037px;top:649px;font-size:13px;line-height:14px;color:#ececec">1/4</div>
<div class="p" style="left:1074px;top:643px;width:1px;height:24px;background:#555"></div>
<svg class="p" style="left:1083px;top:641px" width="14" height="24" viewBox="0 0 14 24"><rect x="9" y="1" width="2" height="17" fill="#aaa"/><ellipse cx="6" cy="19" rx="5" ry="4" fill="#aaa"/></svg>
<div class="c" style="left:939px;top:679px">MODE</div><div class="c" style="left:1056px;top:680px">TEMPO</div>

<!-- mod sources -->
<div class="pn" style="left:1120px;top:556px;width:278px;height:144px;background:#2a2b2e"></div>
<div class="pn" style="left:1121px;top:557px;width:68px;height:70px"></div><div class="pn" style="left:1191px;top:557px;width:70px;height:70px"></div><div class="pn" style="left:1263px;top:557px;width:68px;height:70px"></div><div class="pn" style="left:1333px;top:557px;width:65px;height:70px"></div>
<div class="pn" style="left:1121px;top:630px;width:68px;height:70px"></div><div class="pn" style="left:1191px;top:630px;width:70px;height:70px"></div><div class="pn" style="left:1263px;top:630px;width:68px;height:70px"></div><div class="pn" style="left:1333px;top:630px;width:65px;height:70px"></div>
<div class="sl" style="left:1122px;top:559px;width:6px;height:66px"></div><div class="sl" style="left:1192px;top:559px;width:6px;height:66px"></div><div class="sl" style="left:1264px;top:559px;width:6px;height:66px"></div><div class="sl" style="left:1334px;top:559px;width:6px;height:66px"></div>
<div class="sl" style="left:1122px;top:632px;width:6px;height:66px"></div><div class="sl" style="left:1192px;top:632px;width:6px;height:66px"></div><div class="sl" style="left:1264px;top:632px;width:6px;height:66px"></div><div class="sl" style="left:1334px;top:632px;width:6px;height:66px"></div>
<div class="c" style="left:1159px;top:561px">NOTE</div><div class="c" style="left:1230px;top:561px">VELOCITY</div><div class="c" style="left:1300px;top:561px">LIFT</div><div class="c" style="left:1370px;top:561px">OCT NOTE</div>
<div class="c" style="left:1159px;top:634px">PRESSURE</div><div class="c" style="left:1230px;top:634px">SLIDE</div><div class="c" style="left:1300px;top:634px">STEREO</div><div class="c" style="left:1370px;top:634px">RAND</div>

<!-- voice -->
<div class="pn" style="left:808px;top:705px;width:307px;height:70px"></div>
<div class="bx" style="left:815px;top:711px;width:63px;height:41px;border-radius:4px"></div>
<div class="bx" style="left:884px;top:711px;width:60px;height:41px;border-radius:4px"></div>
<div class="c" style="left:846px;top:723px;font-size:13px;line-height:14px;color:#eee">8</div>
<div class="c" style="left:915px;top:723px;font-size:13px;line-height:14px;color:#eee">2</div>
<svg class="p k" style="left:971px;top:709px" width="42" height="42" viewBox="-30 -30 60 60"><circle class="o" r="28"/><circle class="t" r="22" transform="rotate(135)"/><line y1="-8" y2="-21"/></svg>
<svg class="p k" style="left:1052px;top:709px" width="42" height="42" viewBox="-30 -30 60 60"><circle class="o" r="28" style="stroke:#6a3a40"/><circle class="t" r="22" transform="rotate(135)"/><circle class="v" r="22" stroke="#ff6070" stroke-dasharray="103.7 200" transform="rotate(135)"/><line y1="-8" y2="-21" transform="rotate(145)"/></svg>
<div class="c" style="left:846px;top:755px">VOICES</div><div class="c" style="left:916px;top:755px">BEND</div><div class="c" style="left:992px;top:755px">VEL TRK</div><div class="c" style="left:1073px;top:755px">SPREAD</div>
<div class="pn" style="left:1120px;top:705px;width:278px;height:70px"></div>
<svg class="p k" style="left:1142px;top:709px" width="42" height="42" viewBox="-30 -30 60 60"><circle class="o" r="28"/><circle class="t" r="22" transform="rotate(135)"/><line y1="-8" y2="-21" transform="rotate(-145)"/></svg>
<div class="c" style="left:1163px;top:755px">GLIDE</div>
<div class="bx" style="left:1210px;top:710px;width:79px;height:42px;border-radius:4px"></div>
<svg class="p" style="left:1210px;top:710px" width="79" height="42"><line x1="24" y1="36" x2="55" y2="6" stroke="#555" stroke-width="1.3"/></svg>
<div class="c" style="left:1250px;top:755px">SLOPE</div>
<div class="btn" style="left:1296px;top:709px;width:97px;height:19px;color:#777">ALWAYS GLIDE</div>
<div class="btn" style="left:1296px;top:730px;width:97px;height:19px;color:#777">OCTAVE SCALE</div>
<div class="btn" style="left:1296px;top:751px;width:97px;height:19px;color:#777">LEGATO</div>

</body></html>
